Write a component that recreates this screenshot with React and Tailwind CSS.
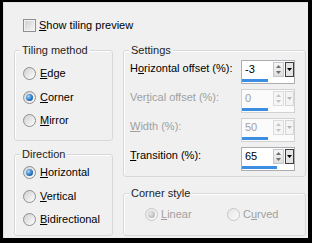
import React from "react";

const tilingItems = [
  { pre: "", key: "E", rest: "dge", checked: false },
  { pre: "", key: "C", rest: "orner", checked: true },
  { pre: "", key: "M", rest: "irror", checked: false },
];

const directionItems = [
  { pre: "", key: "H", rest: "orizontal", checked: true },
  { pre: "", key: "V", rest: "ertical", checked: false },
  { pre: "", key: "B", rest: "idirectional", checked: false },
];

const settingsRows = [
  { pre: "H", key: "o", rest: "rizontal offset (%):", value: "-3", bar: 26, disabled: false },
  { pre: "Ver", key: "t", rest: "ical offset (%):", value: "0", bar: 26, disabled: true },
  { pre: "", key: "W", rest: "idth (%):", value: "50", bar: 26, disabled: true },
  { pre: "", key: "T", rest: "ransition (%):", value: "65", bar: 35, disabled: false },
];

function Label({ pre, k, rest }) {
  return (
    <span>
      {pre}
      <span className="underline underline-offset-[1px]">{k}</span>
      {rest}
    </span>
  );
}

function Radio({ checked, disabled }) {
  return (
    <span
      className={`flex items-center justify-center w-[13px] h-[13px] shrink-0 rounded-full border ${
        disabled
          ? "border-[#c6c6c6] bg-[linear-gradient(135deg,#e6e6e6,#fbfbfb)]"
          : "border-[#8e8f8f] bg-[linear-gradient(135deg,#cfcfcf,#ffffff)]"
      }`}
    >
      {checked && (
        <span
          className={`w-[7px] h-[7px] rounded-full ${
            disabled
              ? "bg-[radial-gradient(circle_at_35%_35%,#e8e8e8,#a8a8a8)]"
              : "bg-[radial-gradient(circle_at_35%_35%,#a6d8ff,#2b78c6_55%,#163f6e)]"
          }`}
        />
      )}
    </span>
  );
}

function GroupBox({ title, className, children }) {
  return (
    <div
      className={`relative border border-[#d5d9dc] rounded-[3px] shadow-[inset_1px_1px_0_#ffffff] ${className}`}
    >
      <span className="absolute left-[5px] -top-[1px] -translate-y-1/2 px-[2px] bg-[#f0f0f0] leading-[13px] text-[#1e1e1e]">
        {title}
      </span>
      {children}
    </div>
  );
}

function Tri({ up, color }) {
  return (
    <svg width="5" height="3" viewBox="0 0 5 3">
      <path d={up ? "M0 3 L2.5 0 L5 3 Z" : "M0 0 L5 0 L2.5 3 Z"} fill={color} />
    </svg>
  );
}

function Spin({ value, bar, disabled }) {
  return (
    <div
      className={`w-[54px] h-[24px] border flex flex-col ${
        disabled ? "border-[#d2d2d2] bg-[#fbfbfb]" : "border-[#abadb3] bg-white"
      }`}
    >
      <div className="flex h-[17px]">
        <div
          className={`flex-1 pl-[3px] leading-[17px] ${disabled ? "text-[#a0a0a0]" : "text-black"}`}
        >
          {value}
        </div>
        <div
          className={`w-[11px] my-[1px] border flex flex-col items-center justify-center gap-[3px] ${
            disabled
              ? "border-[#dcdcdc] bg-[#f6f6f6]"
              : "border-[#c3c7cc] bg-[linear-gradient(#f6f6f6,#dedede)]"
          }`}
        >
          <Tri up color={disabled ? "#c4c4c4" : "#6d6d6d"} />
          <Tri color={disabled ? "#c4c4c4" : "#6d6d6d"} />
        </div>
        <div
          className={`w-[9px] ml-[1px] my-[1px] border flex items-center justify-center ${
            disabled ? "border-[#d6d6d6] bg-[#f4f4f4]" : "border-[#3c3c3c] bg-[#e4e4e4]"
          }`}
        >
          <Tri color={disabled ? "#b4b4b4" : "#000000"} />
        </div>
      </div>
      <div className="flex-1 pt-[1px]">
        <div className="h-[3px] bg-[#3b8ee0]" style={{ width: bar }} />
      </div>
    </div>
  );
}

export default function App() {
  return (
    <div className="w-[312px] h-[243px] bg-black pt-[2px] pl-[3px] pr-[4px] pb-[5px] font-['Liberation_Sans',Arial,sans-serif] text-[11px] text-black">
      <div className="h-full bg-[#f0f0f0] border-t border-l border-[#e2e2e2] flex flex-col">
        {/* Show tiling preview */}
        <div className="flex items-center gap-[3px] mt-[16px] pl-[19px] h-[13px] leading-[13px]">
          <span className="w-[13px] h-[13px] border border-[#8e8f8f] bg-[linear-gradient(135deg,#cdcdcd,#f8f8f8)] shadow-[inset_0_0_0_1px_#f2f2f2]" />
          <Label pre="" k="S" rest="how tiling preview" />
        </div>

        <div className="flex gap-[10px] mt-[18px] pl-[10px]">
          {/* Left column */}
          <div className="w-[99px] flex flex-col gap-[13px]">
            <GroupBox title="Tiling method" className="h-[91px] pt-[16px] pl-[8px]">
              <div className="flex flex-col gap-[10.5px]">
                {tilingItems.map((it) => (
                  <div key={it.rest} className="flex items-center gap-[4px] h-[13px] leading-[13px]">
                    <Radio checked={it.checked} />
                    <Label pre={it.pre} k={it.key} rest={it.rest} />
                  </div>
                ))}
              </div>
            </GroupBox>
            <GroupBox title="Direction" className="h-[82px] pt-[11px] pl-[8px]">
              <div className="flex flex-col gap-[10.5px]">
                {directionItems.map((it) => (
                  <div key={it.rest} className="flex items-center gap-[4px] h-[13px] leading-[13px]">
                    <Radio checked={it.checked} />
                    <Label pre={it.pre} k={it.key} rest={it.rest} />
                  </div>
                ))}
              </div>
            </GroupBox>
          </div>

          {/* Right column */}
          <div className="w-[183px] flex flex-col gap-[16px]">
            <GroupBox title="Settings" className="h-[127px] pt-[9px] pl-[6px] pr-[10px]">
              <div className="flex flex-col gap-[5px]">
                {settingsRows.map((r) => (
                  <div key={r.rest} className="flex justify-between h-[24px]">
                    <div
                      className={`h-[17px] flex items-center ${r.disabled ? "text-[#a0a0a0]" : "text-black"}`}
                    >
                      <Label pre={r.pre} k={r.key} rest={r.rest} />
                    </div>
                    <Spin value={r.value} bar={r.bar} disabled={r.disabled} />
                  </div>
                ))}
              </div>
            </GroupBox>
            <GroupBox title="Corner style" className="h-[43px] pt-[14px] pl-[21px]">
              <div className="flex text-[#a0a0a0] leading-[13px]">
                <div className="w-[82px] flex items-center gap-[3px]">
                  <Radio checked disabled />
                  <Label pre="" k="L" rest="inear" />
                </div>
                <div className="flex items-center gap-[3px]">
                  <Radio disabled />
                  <Label pre="C" k="u" rest="rved" />
                </div>
              </div>
            </GroupBox>
          </div>
        </div>
      </div>
    </div>
  );
}
